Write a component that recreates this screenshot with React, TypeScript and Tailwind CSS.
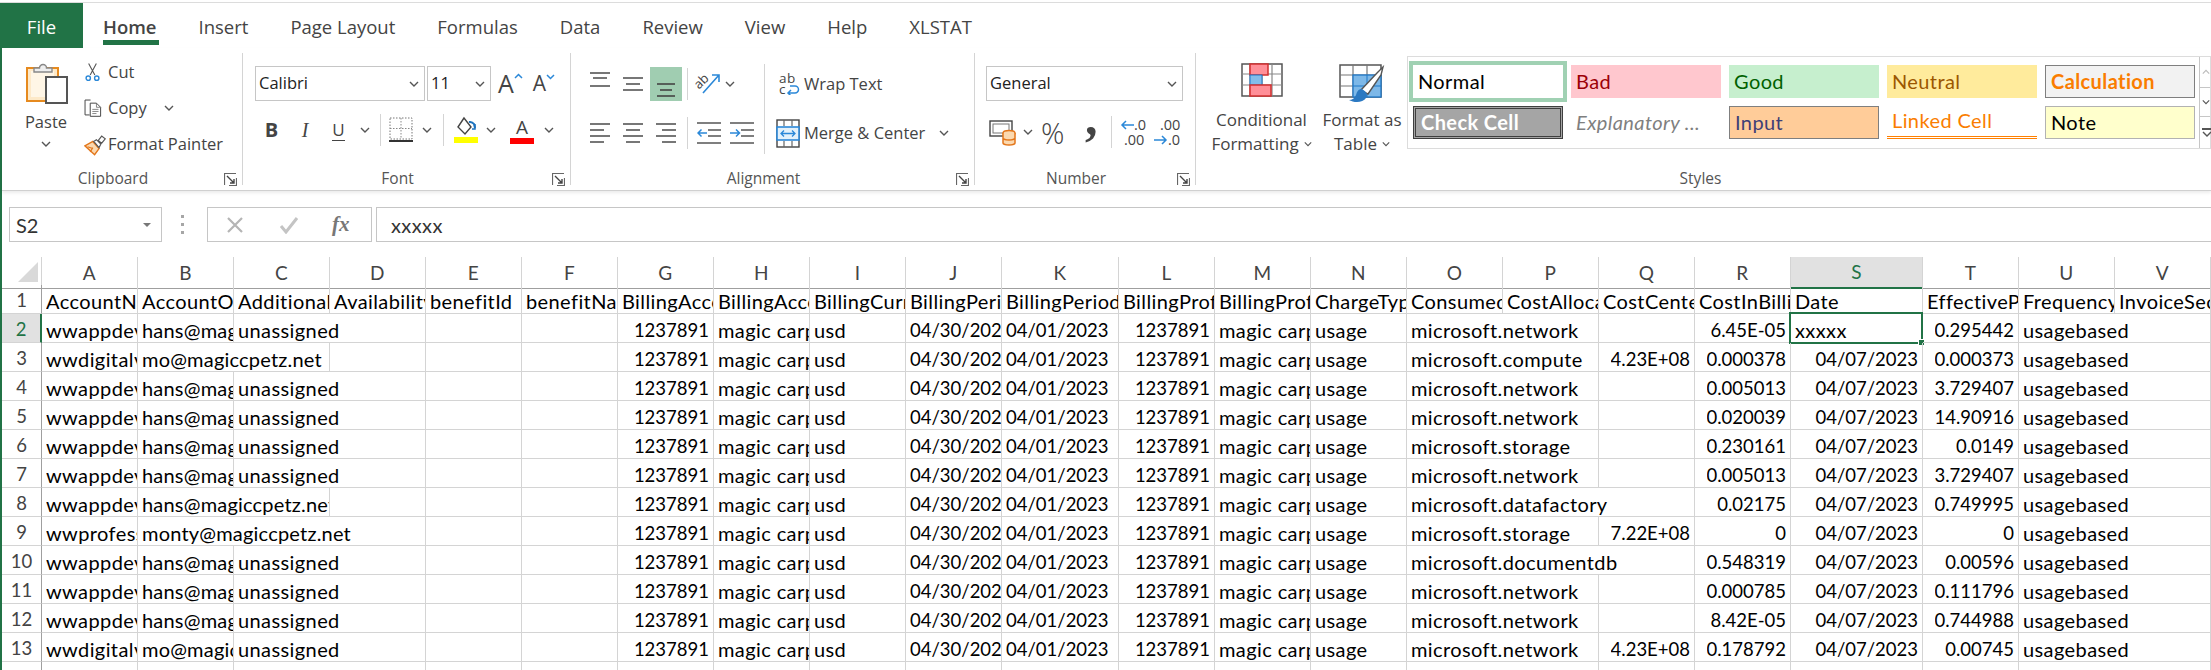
import React from "react";

type Cell = { t: string; span?: number; right?: boolean };

const spanClass: Record<number, string> = {
  1: "col-span-1",
  2: "col-span-2",
  3: "col-span-3",
};

const letters = "ABCDEFGHIJKLMNOPQRSTUV".split("");

const tabs = ["Insert", "Page Layout", "Formulas", "Data", "Review", "View", "Help", "XLSTAT"];

const headers = [
  "AccountName",
  "AccountOwnerId",
  "AdditionalInfo",
  "AvailabilityZone",
  "benefitId",
  "benefitName",
  "BillingAccountId",
  "BillingAccountName",
  "BillingCurrency",
  "BillingPeriodEndDate",
  "BillingPeriodStartDate",
  "BillingProfileId",
  "BillingProfileName",
  "ChargeType",
  "ConsumedService",
  "CostAllocationRuleName",
  "CostCenter",
  "CostInBillingCurrency",
  "Date",
  "EffectivePrice",
  "Frequency",
  "InvoiceSectionId",
];

// a, b, span of b, consumed service, span of it, cost center, cost, date, price
type RowData = [string, string, number, string, number, string, string, string, string];

const rows: RowData[] = [
  ["wwappdevops", "hans@magiccpetz.net", 1, "microsoft.network", 2, "", "6.45E-05", "xxxxx", "0.295442"],
  ["wwdigitalvideo", "mo@magiccpetz.net", 2, "microsoft.compute", 2, "4.23E+08", "0.000378", "04/07/2023", "0.000373"],
  ["wwappdevops", "hans@magiccpetz.net", 1, "microsoft.network", 2, "", "0.005013", "04/07/2023", "3.729407"],
  ["wwappdevops", "hans@magiccpetz.net", 1, "microsoft.network", 2, "", "0.020039", "04/07/2023", "14.90916"],
  ["wwappdevops", "hans@magiccpetz.net", 1, "microsoft.storage", 2, "", "0.230161", "04/07/2023", "0.0149"],
  ["wwappdevops", "hans@magiccpetz.net", 1, "microsoft.network", 2, "", "0.005013", "04/07/2023", "3.729407"],
  ["wwappdevops", "hans@magiccpetz.net", 2, "microsoft.datafactory", 3, "", "0.02175", "04/07/2023", "0.749995"],
  ["wwprofessional", "monty@magiccpetz.net", 3, "microsoft.storage", 2, "7.22E+08", "0", "04/07/2023", "0"],
  ["wwappdevops", "hans@magiccpetz.net", 1, "microsoft.documentdb", 3, "", "0.548319", "04/07/2023", "0.00596"],
  ["wwappdevops", "hans@magiccpetz.net", 1, "microsoft.network", 2, "", "0.000785", "04/07/2023", "0.111796"],
  ["wwappdevops", "hans@magiccpetz.net", 1, "microsoft.network", 2, "", "8.42E-05", "04/07/2023", "0.744988"],
  ["wwdigitalvideo", "mo@magiccpetz.net", 1, "microsoft.network", 2, "4.23E+08", "0.178792", "04/07/2023", "0.00745"],
  ["wwappdevops", "hans@magiccpetz.net", 1, "microsoft.network", 2, "", "0.000785", "04/07/2023", "0.111796"],
];

function buildCells(r: RowData): Cell[] {
  const [a, b, bSpan, svc, svcSpan, center, cost, date, price] = r;
  const cells: Cell[] = [{ t: a }, { t: b, span: bSpan }];
  if (bSpan === 1) cells.push({ t: "unassigned", span: 2 });
  if (bSpan === 2) cells.push({ t: "" });
  cells.push({ t: "" }, { t: "" });
  cells.push(
    { t: "1237891", right: true },
    { t: "magic carpet" },
    { t: "usd" },
    { t: "04/30/2023" },
    { t: "04/01/2023" },
    { t: "1237891", right: true },
    { t: "magic carpet" },
    { t: "usage" },
    { t: svc, span: svcSpan },
  );
  if (svcSpan === 2) cells.push({ t: center, right: true });
  cells.push(
    { t: cost, right: true },
    { t: date, right: date !== "xxxxx" },
    { t: price, right: true },
    { t: "usagebased", span: 2 },
  );
  return cells;
}

const gridCols =
  "grid grid-cols-[40px_repeat(10,96px)_117px_repeat(7,96px)_132px_repeat(3,96px)]";

function Chevron({ className = "" }: { className?: string }) {
  return (
    <svg width="10" height="6" viewBox="0 0 10 6" className={className}>
      <path d="M1 1l4 4 4-4" fill="none" stroke="#555" strokeWidth="1.4" />
    </svg>
  );
}

function Launcher() {
  return (
    <svg width="13" height="13" viewBox="0 0 13 13">
      <path d="M.5 12V.5H12" fill="none" stroke="#666" strokeWidth="1.2" />
      <path d="M12.5 5v7.500H5" fill="none" stroke="#666" strokeWidth="1.2" />
      <path d="M3 3l7 7M6 10h4V6" fill="none" stroke="#444" strokeWidth="1.4" />
    </svg>
  );
}

function Lines({ spec, color = "#555" }: { spec: [number, number, number][]; color?: string }) {
  return (
    <svg width="24" height="30" viewBox="0 0 24 30">
      {spec.map(([x1, x2, y], i) => (
        <line key={i} x1={x1} x2={x2} y1={y} y2={y} stroke={color} strokeWidth="1.6" />
      ))}
    </svg>
  );
}

function PasteIcon() {
  return (
    <svg width="44" height="42" viewBox="0 0 44 42">
      <rect x="3" y="6" width="31" height="33" fill="#fde9c8" stroke="#e68a1f" strokeWidth="2" />
      <rect x="7" y="9" width="23" height="26" fill="#fff6e6" />
      <path d="M10 10V6h5.500a3.500 3.500 0 0 1 7 0H28v4z" fill="#eee" stroke="#888" strokeWidth="1.4" />
      <rect x="22" y="15" width="21" height="26" fill="#fff" stroke="#555" strokeWidth="2" />
    </svg>
  );
}

function ScissorsIcon() {
  return (
    <svg width="22" height="24" viewBox="0 0 22 24">
      <path d="M6 1l8 15M16 1L8 16" fill="none" stroke="#555" strokeWidth="1.4" />
      <circle cx="5.500" cy="20" r="2.800" fill="none" stroke="#2b88d8" strokeWidth="1.8" />
      <circle cx="16.500" cy="20" r="2.800" fill="none" stroke="#2b88d8" strokeWidth="1.8" />
    </svg>
  );
}

function CopyIcon() {
  return (
    <svg width="26" height="26" viewBox="0 0 26 26">
      <path d="M8 23H1.500V1.500h8" fill="none" stroke="#444" strokeWidth="1.4" />
      <path d="M9 6h9l6 6v13H9z" fill="#fff" stroke="#444" strokeWidth="1.4" />
      <path d="M18 6v6h6M12 15h9M12 18h9M12 21h6" fill="none" stroke="#666" strokeWidth="1.1" />
    </svg>
  );
}

function BrushIcon() {
  return (
    <svg width="26" height="24" viewBox="0 0 26 24">
      <path d="M1 13l9-5 7 8-5 7z" fill="#fbd9b0" stroke="#e3761a" strokeWidth="1.6" />
      <path d="M4 14l6 2M7 20l3-5" stroke="#e3761a" strokeWidth="1.3" />
      <path d="M11 8l3-2 5 5-2 4zM16 7l4-5 4 3-4 5z" fill="#fff" stroke="#555" strokeWidth="1.3" />
    </svg>
  );
}

function BorderIcon() {
  return (
    <svg width="24" height="26" viewBox="0 0 24 26">
      <rect x="1" y="1" width="22" height="21" fill="none" stroke="#777" strokeWidth="1" strokeDasharray="1.500 1.500" />
      <path d="M12 1v21M1 11.500h22" stroke="#888" strokeWidth="1" strokeDasharray="1.500 1.500" />
      <path d="M0 24h24" stroke="#333" strokeWidth="2" />
    </svg>
  );
}

function FillIcon() {
  return (
    <svg width="24" height="28" viewBox="0 0 24 28">
      <path d="M10 2l-6 9 7 7 6-7z" fill="#fff" stroke="#444" strokeWidth="1.4" />
      <path d="M15 6a5 5 0 0 1 5 2l1 4" fill="none" stroke="#1e73be" strokeWidth="2" />
      <path d="M21 8v5h-3" fill="none" stroke="#1e73be" strokeWidth="1.5" />
      <rect x="0" y="21" width="24" height="6" fill="#ffff00" />
    </svg>
  );
}

function OrientationIcon() {
  return (
    <svg width="28" height="30" viewBox="0 0 28 30">
      <path d="M10 24L26 6M19 6h7v7" fill="none" stroke="#2b88d8" strokeWidth="1.6" />
      <text x="1" y="17" fontSize="13" fill="#444" transform="rotate(-45 8 13)" className="font-['Open_Sans']">
        ab
      </text>
    </svg>
  );
}

function IndentIcon({ flip = false }: { flip?: boolean }) {
  return (
    <svg width="24" height="26" viewBox="0 0 24 26">
      <path d="M0 3h24M11 10h13M11 16h13M0 23h24" stroke="#555" strokeWidth="1.5" />
      <path
        d={flip ? "M0 13h9M6 9.500l3.500 3.500L6 16.500" : "M1 13h9M4.500 9.500L1 13l3.500 3.500"}
        fill="none"
        stroke="#2b88d8"
        strokeWidth="1.5"
      />
    </svg>
  );
}

function MergeIcon() {
  return (
    <svg width="24" height="29" viewBox="0 0 24 29">
      <rect x="1" y="1" width="22" height="27" fill="#fff" stroke="#444" strokeWidth="1.4" />
      <path d="M8 1v6M16 1v6M8 22v6M16 22v6" stroke="#666" strokeWidth="1.2" />
      <rect x="1" y="8" width="22" height="13" fill="#e3f1fb" stroke="#2b88d8" strokeWidth="1.6" />
      <path d="M5 14.500h14M8 11.500l-3 3 3 3M16 11.500l3 3-3 3" fill="none" stroke="#2b88d8" strokeWidth="1.3" />
    </svg>
  );
}

function AccountingIcon() {
  return (
    <svg width="28" height="28" viewBox="0 0 28 28">
      <rect x="1" y="3" width="22" height="15" fill="#fff" stroke="#444" strokeWidth="1.4" />
      <rect x="4" y="6" width="16" height="9" fill="none" stroke="#777" strokeWidth="1" />
      <ellipse cx="20" cy="15" rx="6" ry="2.600" fill="#fbd9b0" stroke="#e3761a" strokeWidth="1.5" />
      <path d="M14 15v10c0 1 3 2 6 2s6-1 6-2V15M14 20c0 1 3 2 6 2s6-1 6-2" fill="#fbd9b0" stroke="#e3761a" strokeWidth="1.5" />
    </svg>
  );
}

function ConditionalIcon() {
  return (
    <svg width="42" height="34" viewBox="0 0 42 34">
      <rect x="1" y="1" width="40" height="32" fill="#fff" stroke="#555" strokeWidth="1.5" />
      <path d="M9 1v32M21 1v32M31 1v32M1 11h40M1 22h40" stroke="#888" strokeWidth="1.2" />
      <rect x="9" y="1" width="18" height="11" fill="#ff8f98" stroke="#d22f2f" strokeWidth="1.5" />
      <rect x="9" y="12" width="12" height="10" fill="#83bdea" stroke="#1f78c8" strokeWidth="1" />
      <rect x="9" y="22" width="21" height="11" fill="#ff8f98" stroke="#d22f2f" strokeWidth="1.5" />
    </svg>
  );
}

function TableIcon() {
  return (
    <svg width="46" height="40" viewBox="0 0 46 40">
      <rect x="1" y="1" width="41" height="32" fill="#fff" stroke="#555" strokeWidth="1.5" />
      <path d="M14 1v32M28 1v32M1 11h41M1 22h41" stroke="#777" strokeWidth="1.2" />
      <rect x="14" y="11" width="28" height="22" fill="#7db8e8" stroke="#1f78c8" strokeWidth="1.3" />
      <path d="M28 11v22M14 22h28" stroke="#1f78c8" strokeWidth="1" />
      <path d="M22 26L38 9l6-6-2 8-13 19z" fill="#fff" stroke="#555" strokeWidth="1.4" />
      <path d="M23 25c-4 0-5 3-6 6-1 3-4 5-7 5 5 3 14 3 17-2 2-3 1-6-4-9z" fill="#2b79c2" />
    </svg>
  );
}

function Group({
  label,
  width,
  launcher = true,
  children,
}: {
  label: string;
  width: string;
  launcher?: boolean;
  children: React.ReactNode;
}) {
  return (
    <div className={`${width} flex shrink-0 flex-col`}>
      <div className="min-h-0 flex-1">{children}</div>
      <div className="mb-[-8px] flex h-[26px] items-center pr-[5px] pb-[2px] text-[15.5px] text-[#555]">
        <span className="flex-1 text-center">{label}</span>
        {launcher && <Launcher />}
      </div>
    </div>
  );
}

const IconBox = ({ w, children }: { w: string; children: React.ReactNode }) => (
  <div className={`${w} flex h-[34px] shrink-0 items-center justify-center`}>{children}</div>
);

const VSep = () => <div className="mx-[5px] h-[32px] w-px bg-[#d4d4d4]" />;

const styleClass =
  "flex h-[33px] items-center px-[5px] pb-[2px] text-[20px] tracking-[0.4px] font-['Lato'] leading-none";

function ClipboardGroup() {
  return (
    <Group label="Clipboard" width="w-[241px] border-r border-[#d4d4d4]">
      <div className="flex">
        <div className="ml-[20px] flex w-[48px] flex-col items-center pt-[9px]">
          <PasteIcon />
          <span className="mt-[8px] text-[16.5px] leading-[20px]">Paste</span>
          <Chevron className="mt-[9px]" />
        </div>
        <div className="ml-[14px] flex flex-col pt-[1px] text-[16.5px]">
          <div className="flex h-[36px] items-center">
            <span className="flex w-[23px] justify-center pr-[6px]">
              <ScissorsIcon />
            </span>
            <span className="ml-[1px]">Cut</span>
          </div>
          <div className="flex h-[36px] items-center">
            <span className="flex w-[23px] justify-center pr-[5px]">
              <CopyIcon />
            </span>
            <span className="ml-[1px]">Copy</span>
            <Chevron className="ml-[17px]" />
          </div>
          <div className="flex h-[37px] items-center">
            <span className="flex w-[23px] justify-center">
              <BrushIcon />
            </span>
            <span className="ml-[1px]">Format Painter</span>
          </div>
        </div>
      </div>
    </Group>
  );
}

function FontGroup() {
  return (
    <Group label="Font" width="w-[328px] border-r border-[#d4d4d4]">
      <div className="pt-[13px] pl-[12px]">
        <div className="flex items-center">
          <div className="flex h-[35px] w-[170px] items-center justify-between border border-[#c6c6c6] pr-[5px] pl-[3px] text-[16.5px] text-[#222]">
            Calibri <Chevron />
          </div>
          <div className="ml-[2px] flex h-[35px] w-[64px] items-center justify-between border border-[#c6c6c6] pr-[5px] pl-[3px] text-[16.5px] text-[#222]">
            11 <Chevron />
          </div>
          <div className="ml-[7px] flex items-start text-[#444]">
            <span className="text-[25px] leading-none">A</span>
            <svg width="9" height="6" viewBox="0 0 9 6" className="mt-[2px]">
              <path d="M1 5l3.500-3.500L8 5" fill="none" stroke="#2b88d8" strokeWidth="1.5" />
            </svg>
          </div>
          <div className="ml-[10px] flex items-start text-[#444]">
            <span className="text-[21px] leading-none">A</span>
            <svg width="9" height="6" viewBox="0 0 9 6" className="mt-[1px]">
              <path d="M1 1l3.500 3.500L8 1" fill="none" stroke="#2b88d8" strokeWidth="1.5" />
            </svg>
          </div>
        </div>
        <div className="mt-[12px] flex items-center text-[#444]">
          <IconBox w="w-[33px]">
            <span className="text-[20px] font-bold">B</span>
          </IconBox>
          <IconBox w="w-[34px]">
            <span className="font-['Liberation_Serif'] text-[20px] italic">I</span>
          </IconBox>
          <IconBox w="w-[33px]">
            <span className="border-b border-[#444] text-[17px] leading-[21px]">U</span>
          </IconBox>
          <IconBox w="w-[20px]">
            <Chevron />
          </IconBox>
          <VSep />
          <IconBox w="w-[30px]">
            <BorderIcon />
          </IconBox>
          <IconBox w="w-[22px]">
            <Chevron />
          </IconBox>
          <VSep />
          <div className="ml-[2px]">
            <IconBox w="w-[30px]">
              <FillIcon />
            </IconBox>
          </div>
          <IconBox w="w-[20px]">
            <Chevron />
          </IconBox>
          <div className="ml-[6px]">
            <IconBox w="w-[30px]">
              <div className="flex flex-col items-center">
                <span className="text-[19px] leading-[21px]">A</span>
                <span className="h-[6px] w-[24px] bg-[#ff0000]" />
              </div>
            </IconBox>
          </div>
          <IconBox w="w-[24px]">
            <Chevron />
          </IconBox>
        </div>
      </div>
    </Group>
  );
}

function AlignmentGroup() {
  return (
    <Group label="Alignment" width="w-[404px] border-r border-[#d4d4d4]">
      <div className="flex pt-[14px] pl-[12px]">
        <div className="flex w-[181px] flex-col">
          <div className="flex items-center">
            <IconBox w="w-[33px]">
              <Lines spec={[[2, 22, 4], [5, 19, 9], [2, 22, 17]]} />
            </IconBox>
            <IconBox w="w-[34px]">
              <Lines spec={[[2, 22, 9], [5, 19, 15], [2, 22, 21]]} />
            </IconBox>
            <div className="flex h-[34px] w-[32px] items-center justify-center bg-[#a0cdb1]">
              <Lines spec={[[3, 21, 15], [6, 18, 21], [3, 21, 27]]} color="#444" />
            </div>
            <VSep />
            <OrientationIcon />
            <Chevron className="ml-[4px]" />
          </div>
          <div className="mt-[15px] flex items-center">
            <IconBox w="w-[33px]">
              <Lines spec={[[2, 22, 6], [2, 16, 12], [2, 22, 18], [2, 16, 24]]} />
            </IconBox>
            <IconBox w="w-[34px]">
              <Lines spec={[[2, 22, 6], [5, 19, 12], [2, 22, 18], [5, 19, 24]]} />
            </IconBox>
            <IconBox w="w-[32px]">
              <Lines spec={[[2, 22, 6], [8, 22, 12], [2, 22, 18], [8, 22, 24]]} />
            </IconBox>
            <VSep />
            <IconBox w="w-[32px]">
              <IndentIcon />
            </IconBox>
            <IconBox w="w-[34px]">
              <IndentIcon flip />
            </IconBox>
          </div>
        </div>
        <div className="mt-[-3px] h-[90px] w-px bg-[#d4d4d4]" />
        <div className="ml-[14px] flex flex-col text-[16.5px]">
          <div className="flex h-[34px] items-center">
            <span className="flex w-[24px] flex-col text-[13.5px] leading-[11px] text-[#444]">
              <span className="tracking-[0.5px]">ab</span>
              <span className="flex items-center">
                c
                <svg width="15" height="11" viewBox="0 0 15 11">
                  <path d="M3 9h7a3.500 3.500 0 0 0 0-7H5M6 6L3 9l3 3" fill="none" stroke="#2b88d8" strokeWidth="1.5" />
                </svg>
              </span>
            </span>
            <span className="ml-[1px]">Wrap Text</span>
          </div>
          <div className="mt-[15px] flex h-[34px] items-center">
            <span className="-ml-[3px] flex w-[27px]">
              <MergeIcon />
            </span>
            <span className="ml-[1px]">Merge &amp; Center</span>
            <Chevron className="ml-[14px]" />
          </div>
        </div>
      </div>
    </Group>
  );
}

function NumberGroup() {
  return (
    <Group label="Number" width="w-[221px] border-r border-[#d4d4d4]">
      <div className="pt-[13px] pl-[11px]">
        <div className="flex h-[35px] w-[197px] items-center justify-between border border-[#c6c6c6] pr-[5px] pl-[3px] text-[16.5px] text-[#222]">
          General <Chevron />
        </div>
        <div className="mt-[14px] flex h-[34px] items-center text-[#444]">
          <span className="ml-[3px] flex w-[28px]">
            <AccountingIcon />
          </span>
          <Chevron className="ml-[6px]" />
          <span className="ml-[8px] w-[28px] text-[29px] leading-none font-light">%</span>
          <span className="ml-[16px] h-[34px] w-[14px] font-['Liberation_Serif'] text-[50px] leading-[4px] font-bold">,</span>
          <div className="mr-[8px] ml-[12px] h-[32px] w-px bg-[#d4d4d4]" />
          <div className="flex w-[30px] flex-col text-[14.5px] leading-[15px]">
            <span className="flex items-center">
              <svg width="14" height="10" viewBox="0 0 14 10">
                <path d="M14 5H2M6 1L2 5l4 4" fill="none" stroke="#2b88d8" strokeWidth="1.5" />
              </svg>
              .0
            </span>
            <span className="pl-[4px]">.00</span>
          </div>
          <div className="ml-[4px] flex w-[30px] flex-col text-[14.5px] leading-[15px]">
            <span className="pl-[6px]">.00</span>
            <span className="flex items-center">
              <svg width="14" height="10" viewBox="0 0 14 10">
                <path d="M0 5h12M8 1l4 4-4 4" fill="none" stroke="#2b88d8" strokeWidth="1.5" />
              </svg>
              .0
            </span>
          </div>
        </div>
      </div>
    </Group>
  );
}

function StylesGallery() {
  return (
    <div className="mt-[3px] ml-[3px] flex h-[93px] w-[804px] shrink-0 border border-[#dcdcdc]">
      <div className="grid w-[793px] grid-cols-[repeat(5,150px)] content-start gap-x-[8px] gap-y-[8px] pt-[8px] pl-[5px]">
        <div className={`${styleClass} bg-white text-black outline-[4px] outline-[#a0d1b3]`}>Normal</div>
        <div className={`${styleClass} bg-[#ffc7ce] text-[#9c0006]`}>Bad</div>
        <div className={`${styleClass} bg-[#c6efce] text-[#006100]`}>Good</div>
        <div className={`${styleClass} bg-[#ffeb9c] text-[#9c5700]`}>Neutral</div>
        <div className={`${styleClass} border border-[#7f7f7f] bg-[#f2f2f2] font-bold text-[#fa7d00]`}>Calculation</div>
        <div className={`${styleClass} border-[3px] border-double border-[#3f3f3f] bg-[#a5a5a5] font-bold text-white`}>
          Check Cell
        </div>
        <div className={`${styleClass} text-[#7f7f7f] italic`}>Explanatory ...</div>
        <div className={`${styleClass} border border-[#7f7f7f] bg-[#ffcc99] text-[#3f3f76]`}>Input</div>
        <div className={`${styleClass} border-b-[3px] border-double border-[#ff8001] text-[#fa7d00]`}>Linked Cell</div>
        <div className={`${styleClass} border border-[#b2b2b2] bg-[#ffffcc] text-black`}>Note</div>
      </div>
      <div className="flex w-[11px] flex-col border-l border-[#c6c6c6]">
        <div className="flex h-[31px] items-center border-b border-[#c6c6c6] pl-[2px]">
          <svg width="10" height="6" viewBox="0 0 10 6">
            <path d="M1 5l4-4 4 4" fill="none" stroke="#bbb" strokeWidth="1.4" />
          </svg>
        </div>
        <div className="flex h-[29px] items-center border-b border-[#c6c6c6] pl-[2px]">
          <Chevron />
        </div>
        <div className="flex flex-1 flex-col justify-center pl-[2px]">
          <div className="h-[2px] w-[9px] bg-[#555]" />
          <Chevron className="mt-[1px]" />
        </div>
      </div>
    </div>
  );
}

function StylesGroup() {
  return (
    <Group label="Styles" width="w-[1014px]" launcher={false}>
      <div className="flex">
        <div className="ml-[18px] flex w-[95px] shrink-0 flex-col items-center text-[17px] leading-[24px] whitespace-nowrap">
          <div className="mt-[10px] h-[34px]">
            <ConditionalIcon />
          </div>
          <span className="mt-[11px]">Conditional</span>
          <span className="flex items-center">
            Formatting <Chevron className="ml-[5px] w-[8px]" />
          </span>
        </div>
        <div className="ml-[11px] flex w-[84px] shrink-0 flex-col items-center text-[17px] leading-[24px] whitespace-nowrap">
          <div className="mt-[11px] h-[40px]">
            <TableIcon />
          </div>
          <span className="mt-[4px]">Format as</span>
          <span className="flex items-center">
            Table <Chevron className="ml-[5px] w-[8px]" />
          </span>
        </div>
        <StylesGallery />
      </div>
    </Group>
  );
}

function GridCell({ cell, active }: { cell: Cell; active?: boolean }) {
  // digits of the fallback font run wider than the reference, so numbers get a smaller size
  const numeric = /^[\d./E+-]+$/.test(cell.t);
  const email = cell.t.includes("@");
  return (
    <div
      className={`${spanClass[cell.span ?? 1]} relative flex h-[29px] items-center border-r border-b border-[#d4d4d4] pt-[3px] whitespace-nowrap ${
        cell.right ? "justify-end pr-[4px]" : "pl-[4px]"
      }`}
    >
      <span
        className={`block max-w-full overflow-hidden ${numeric ? "translate-y-[1px] text-[18.5px] tracking-normal" : ""} ${
          email ? "tracking-[0.2px]" : ""
        }`}
      >
        {cell.t}
      </span>
      {active && (
        <div className="absolute top-[-2px] left-[-2px] h-[32px] w-[134px] border-2 border-[#217346]">
          <div className="absolute right-[-4px] bottom-[-4px] h-[7px] w-[7px] border border-white bg-[#217346]" />
        </div>
      )}
    </div>
  );
}

export default function App() {
  return (
    <div className="h-[670px] w-[2211px] overflow-hidden bg-white font-['Open_Sans'] text-[#444]">
      <div className="h-[3px] border-b border-[#dcdcdc]" />
      <div className="h-[667px] border-l-2 border-[#217346]">
        {/* Tabs */}
        <div className="flex h-[45px] items-center text-[18.5px]">
          <div className="-ml-[2px] flex h-[45px] w-[83px] items-center justify-center bg-[#217346] pt-[3px] text-white">File</div>
          <div className="ml-[20px] flex h-[45px] items-center gap-[42px]">
            <div className="relative flex h-[45px] items-center pt-[3px] font-semibold">
              Home
              <div className="absolute right-[-2px] bottom-[3px] left-0 h-[5px] bg-[#217346]" />
            </div>
            {tabs.map((t) => (
              <span key={t} className="flex h-[45px] items-center pt-[3px]">
                {t}
              </span>
            ))}
          </div>
        </div>

        {/* Ribbon */}
        <div className="flex h-[143px] border-b border-[#d0d0d0] pt-[5px] pb-[5px] shadow-[0_2px_3px_rgba(0,0,0,0.08)]">
          <ClipboardGroup />
          <FontGroup />
          <AlignmentGroup />
          <NumberGroup />
          <StylesGroup />
        </div>

        {/* Formula bar */}
        <div className="flex pt-[16px] pl-[7px] text-[20px]">
          <div className="flex h-[35px] w-[153px] items-center justify-between border border-[#c6c6c6] pr-[10px] pl-[6px] font-['Lato'] text-[#333]">
            S2
            <div className="h-0 w-0 border-x-[4px] border-t-[4px] border-x-transparent border-t-[#777]" />
          </div>
          <div className="ml-[19px] flex h-[35px] w-[3px] flex-col justify-center gap-[5px]">
            <div className="h-[3px] w-[3px] bg-[#a6a6a6]" />
            <div className="h-[3px] w-[3px] bg-[#a6a6a6]" />
            <div className="h-[3px] w-[3px] bg-[#a6a6a6]" />
          </div>
          <div className="ml-[23px] flex h-[35px] w-[165px] items-center border border-[#c6c6c6]">
            <svg width="18" height="18" viewBox="0 0 18 18" className="ml-[18px]">
              <path d="M2 2l14 14M16 2L2 16" stroke="#b5b5b5" strokeWidth="2.2" />
            </svg>
            <svg width="20" height="18" viewBox="0 0 20 18" className="ml-[35px]">
              <path d="M2 10l5 6L18 2" fill="none" stroke="#c4c4c4" strokeWidth="3" />
            </svg>
            <span className="ml-[33px] font-['Liberation_Serif'] text-[21px] font-bold text-[#777] italic">fx</span>
          </div>
          <div className="ml-[4px] flex h-[35px] flex-1 items-center border-y border-l border-[#c6c6c6] pl-[14px] font-['Lato'] tracking-[0.4px] text-[#333]">
            xxxxx
          </div>
        </div>

        {/* Sheet */}
        <div className="mt-[15px] font-['Lato'] text-[20px] tracking-[0.4px] text-black">
          <div className={`${gridCols} h-[28px] text-[#444]`}>
            <div className="flex items-center justify-end border-r border-b border-r-[#d4d4d4] border-b-[#9f9f9f] pr-[3px]">
              <div className="h-0 w-0 border-b-[20px] border-l-[20px] border-b-[#d9d9d9] border-l-transparent" />
            </div>
            {letters.map((l) => (
              <div
                key={l}
                className={`flex items-center justify-center border-r border-r-[#d4d4d4] pt-[1px] text-[19px] ${
                  l === "S"
                    ? "border-b-2 border-b-[#217346] bg-[#e1e1e1] text-[#217346]"
                    : "border-b border-b-[#9f9f9f]"
                }`}
              >
                {l}
              </div>
            ))}
          </div>

          <div className={gridCols}>
            <div className="flex h-[29px] items-center justify-center border-r border-b border-r-[#9f9f9f] border-b-[#d4d4d4] pt-[3px] text-[18.5px] tracking-normal text-[#444]">
              1
            </div>
            {headers.map((h) => (
              <GridCell key={h} cell={{ t: h }} />
            ))}
          </div>

          {rows.map((r, i) => (
            <div key={i} className={gridCols}>
              <div
                className={`flex h-[29px] items-center justify-center border-b border-b-[#d4d4d4] pt-[3px] text-[18.5px] tracking-normal ${
                  i === 0
                    ? "border-r-2 border-r-[#217346] bg-[#e1e1e1] text-[#217346]"
                    : "border-r border-r-[#9f9f9f] text-[#444]"
                }`}
              >
                {i + 2}
              </div>
              {buildCells(r).map((c, j) => (
                <GridCell key={j} cell={c} active={i === 0 && c.t === "xxxxx"} />
              ))}
            </div>
          ))}
        </div>
      </div>
    </div>
  );
}
